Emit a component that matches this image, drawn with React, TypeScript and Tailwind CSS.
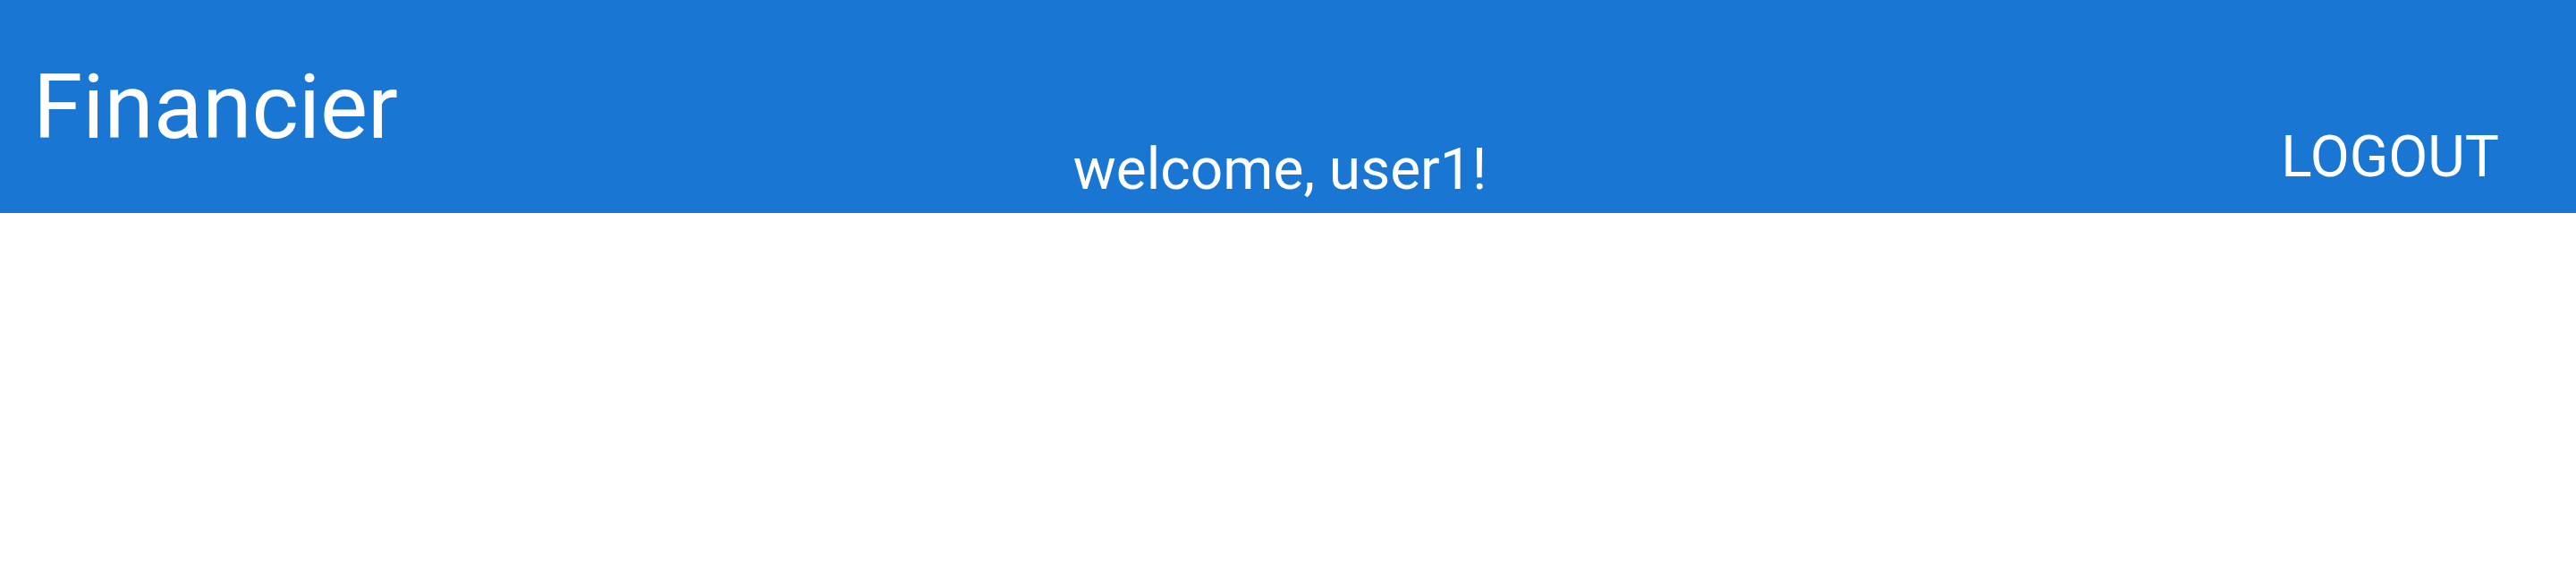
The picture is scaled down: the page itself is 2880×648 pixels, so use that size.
export default function App() {
  return (
    <div className="min-h-[648px] bg-white" style={{ fontFamily: "Roboto, 'Noto Sans', sans-serif" }}>
      <header className="h-[238px] bg-[#1976d2] text-white grid grid-cols-[1fr_auto_1fr] items-start pl-[37px] pr-[55px]">
        <h1 className="mt-[70px] text-[100px] leading-none font-normal justify-self-start">Financier</h1>
        <div className="mt-[158px] text-[64px] leading-none">welcome, user1!</div>
        <button className="mt-[144px] mr-[31px] text-[64px] leading-none uppercase justify-self-end">Logout</button>
      </header>
    </div>
  );
}
